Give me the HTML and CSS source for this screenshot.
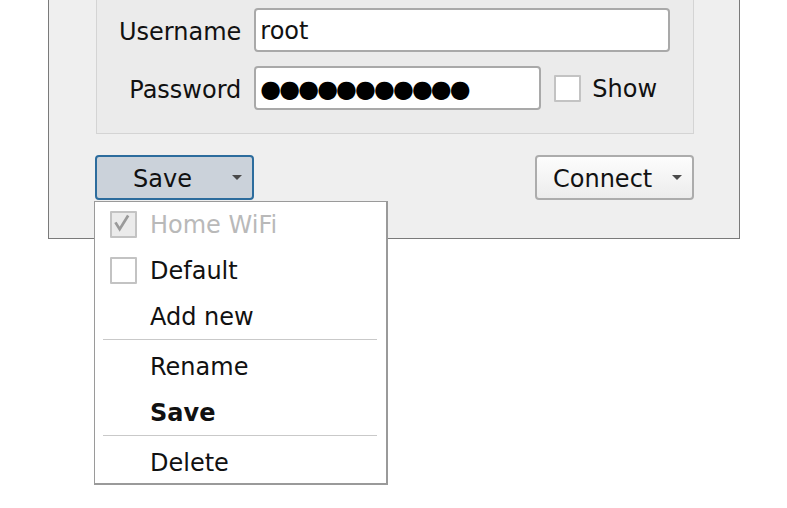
FILE: index.html
```html
<!DOCTYPE html>
<html>
<head>
<meta charset="utf-8">
<link rel="stylesheet" href="styles.css">
</head>
<body>
<div class="window">
  <div class="group">
    <div class="form">
      <label class="label">Username</label>
      <div class="field field-user">root</div>
      <label class="label">Password</label>
      <div class="pw-row">
        <div class="field field-pw"><span class="dots">&#9679;&#9679;&#9679;&#9679;&#9679;&#9679;&#9679;&#9679;&#9679;&#9679;&#9679;</span></div>
        <span class="checkbox"></span>
        <span class="cb-label">Show</span>
      </div>
    </div>
  </div>
  <div class="actions">
    <div class="menu-anchor">
      <div class="button button-save active"><span>Save</span><span class="arrow"></span></div>
      <div class="menu">
        <div class="item disabled"><span class="checkbox checked"><svg viewBox="0 0 27 27" width="23" height="23"><path d="M4 11 L9 19 L19 3" fill="none" stroke="#9a9a9a" stroke-width="3.2" stroke-linejoin="miter"/></svg></span><span class="text">Home WiFi</span></div>
        <div class="item"><span class="checkbox"></span><span class="text">Default</span></div>
        <div class="item"><span class="text">Add new</span></div>
        <div class="sep"></div>
        <div class="item"><span class="text">Rename</span></div>
        <div class="item"><span class="text bold">Save</span></div>
        <div class="sep"></div>
        <div class="item item-last"><span class="text">Delete</span></div>
      </div>
    </div>
    <div class="button button-connect"><span>Connect</span><span class="arrow"></span></div>
  </div>
</div>
</body>
</html>
```
FILE: styles.css
```css
html, body {
  margin: 0;
  padding: 0;
  background: #ffffff;
}
body {
  font-family: "DejaVu Sans", sans-serif;
  font-size: 24px;
  color: #111;
  min-height: 508px;
}
.window {
  margin-left: 48px;
  width: 690px;
  height: 238px;
  background: #efefef;
  border: 1px solid #7a7a7a;
  border-top: none;
  box-sizing: content-box;
  display: flex;
  flex-direction: column;
}
.group {
  margin-left: 47px;
  margin-right: 45px;
  height: 133px;
  background: #ebebeb;
  border: 1px solid #d4d4d4;
  border-top: none;
  box-sizing: content-box;
}
.form {
  display: grid;
  grid-template-columns: auto 1fr;
  grid-auto-rows: 44px;
  column-gap: 13px;
  row-gap: 14px;
  padding: 8px 23px 0 22px;
  align-items: center;
}
.label {
  text-align: right;
  height: 44px;
  line-height: 48px;
}
.field {
  height: 44px;
  box-sizing: border-box;
  border: 2px solid #a9a9a9;
  border-radius: 4px;
  background: #fff;
  padding-left: 4px;
  padding-top: 2px;
  display: flex;
  align-items: center;
}
.pw-row {
  display: flex;
  align-items: center;
  height: 44px;
}
.field-pw {
  width: 287px;
}
.dots {
  font-size: 24px;
  letter-spacing: -2px;
  color: #000;
}
.checkbox {
  width: 27px;
  height: 27px;
  box-sizing: border-box;
  border: 2px solid #c3c3c3;
  background: #fff;
  border-radius: 1px;
  display: inline-flex;
  align-items: center;
  justify-content: center;
  flex: none;
}
.pw-row .checkbox {
  margin-left: 13px;
}
.cb-label {
  margin-left: 11px;
  padding-top: 2px;
}
.actions {
  display: flex;
  justify-content: space-between;
  margin-top: 21px;
  margin-left: 46px;
  margin-right: 45px;
}
.menu-anchor {
  position: relative;
}
.button {
  width: 159px;
  height: 45px;
  box-sizing: border-box;
  border-radius: 4px;
  display: flex;
  align-items: center;
  padding-right: 10px;
  padding-top: 2px;
}
.button-save {
  background: #cbd2da;
  border: 2px solid #2c6c9d;
  padding-left: 36px;
}
.button-connect {
  background: linear-gradient(#fdfdfd, #ececec);
  border: 2px solid #acacac;
  padding-left: 16px;
}
.arrow {
  margin-left: auto;
  margin-top: -2px;
  width: 0;
  height: 0;
  border-left: 5px solid transparent;
  border-right: 5px solid transparent;
  border-top: 5px solid #4a4a4a;
}
.menu {
  position: absolute;
  left: -1px;
  top: 46px;
  width: 294px;
  box-sizing: border-box;
  background: #fff;
  border: 1px solid #9a9a9a;
  border-right-width: 2px;
  border-bottom-width: 2px;
  z-index: 2;
}
.item {
  height: 46px;
  box-sizing: border-box;
  display: flex;
  align-items: center;
  padding-left: 15px;
  position: relative;
}
.item-last {
  height: 43px;
  padding-top: 2px;
  align-items: flex-start;
  line-height: 42px;
}
.item .checkbox {
  position: absolute;
  left: 15px;
  top: 9px;
}
.item .text {
  margin-left: 40px;
}
.item.disabled .text {
  color: #b9b9b9;
}
.checkbox.checked {
  background: #ebebeb;
}
.bold {
  font-weight: bold;
}
.sep {
  height: 1px;
  background: #c9c9c9;
  margin: -1px 9px 4px 8px;
}
```
